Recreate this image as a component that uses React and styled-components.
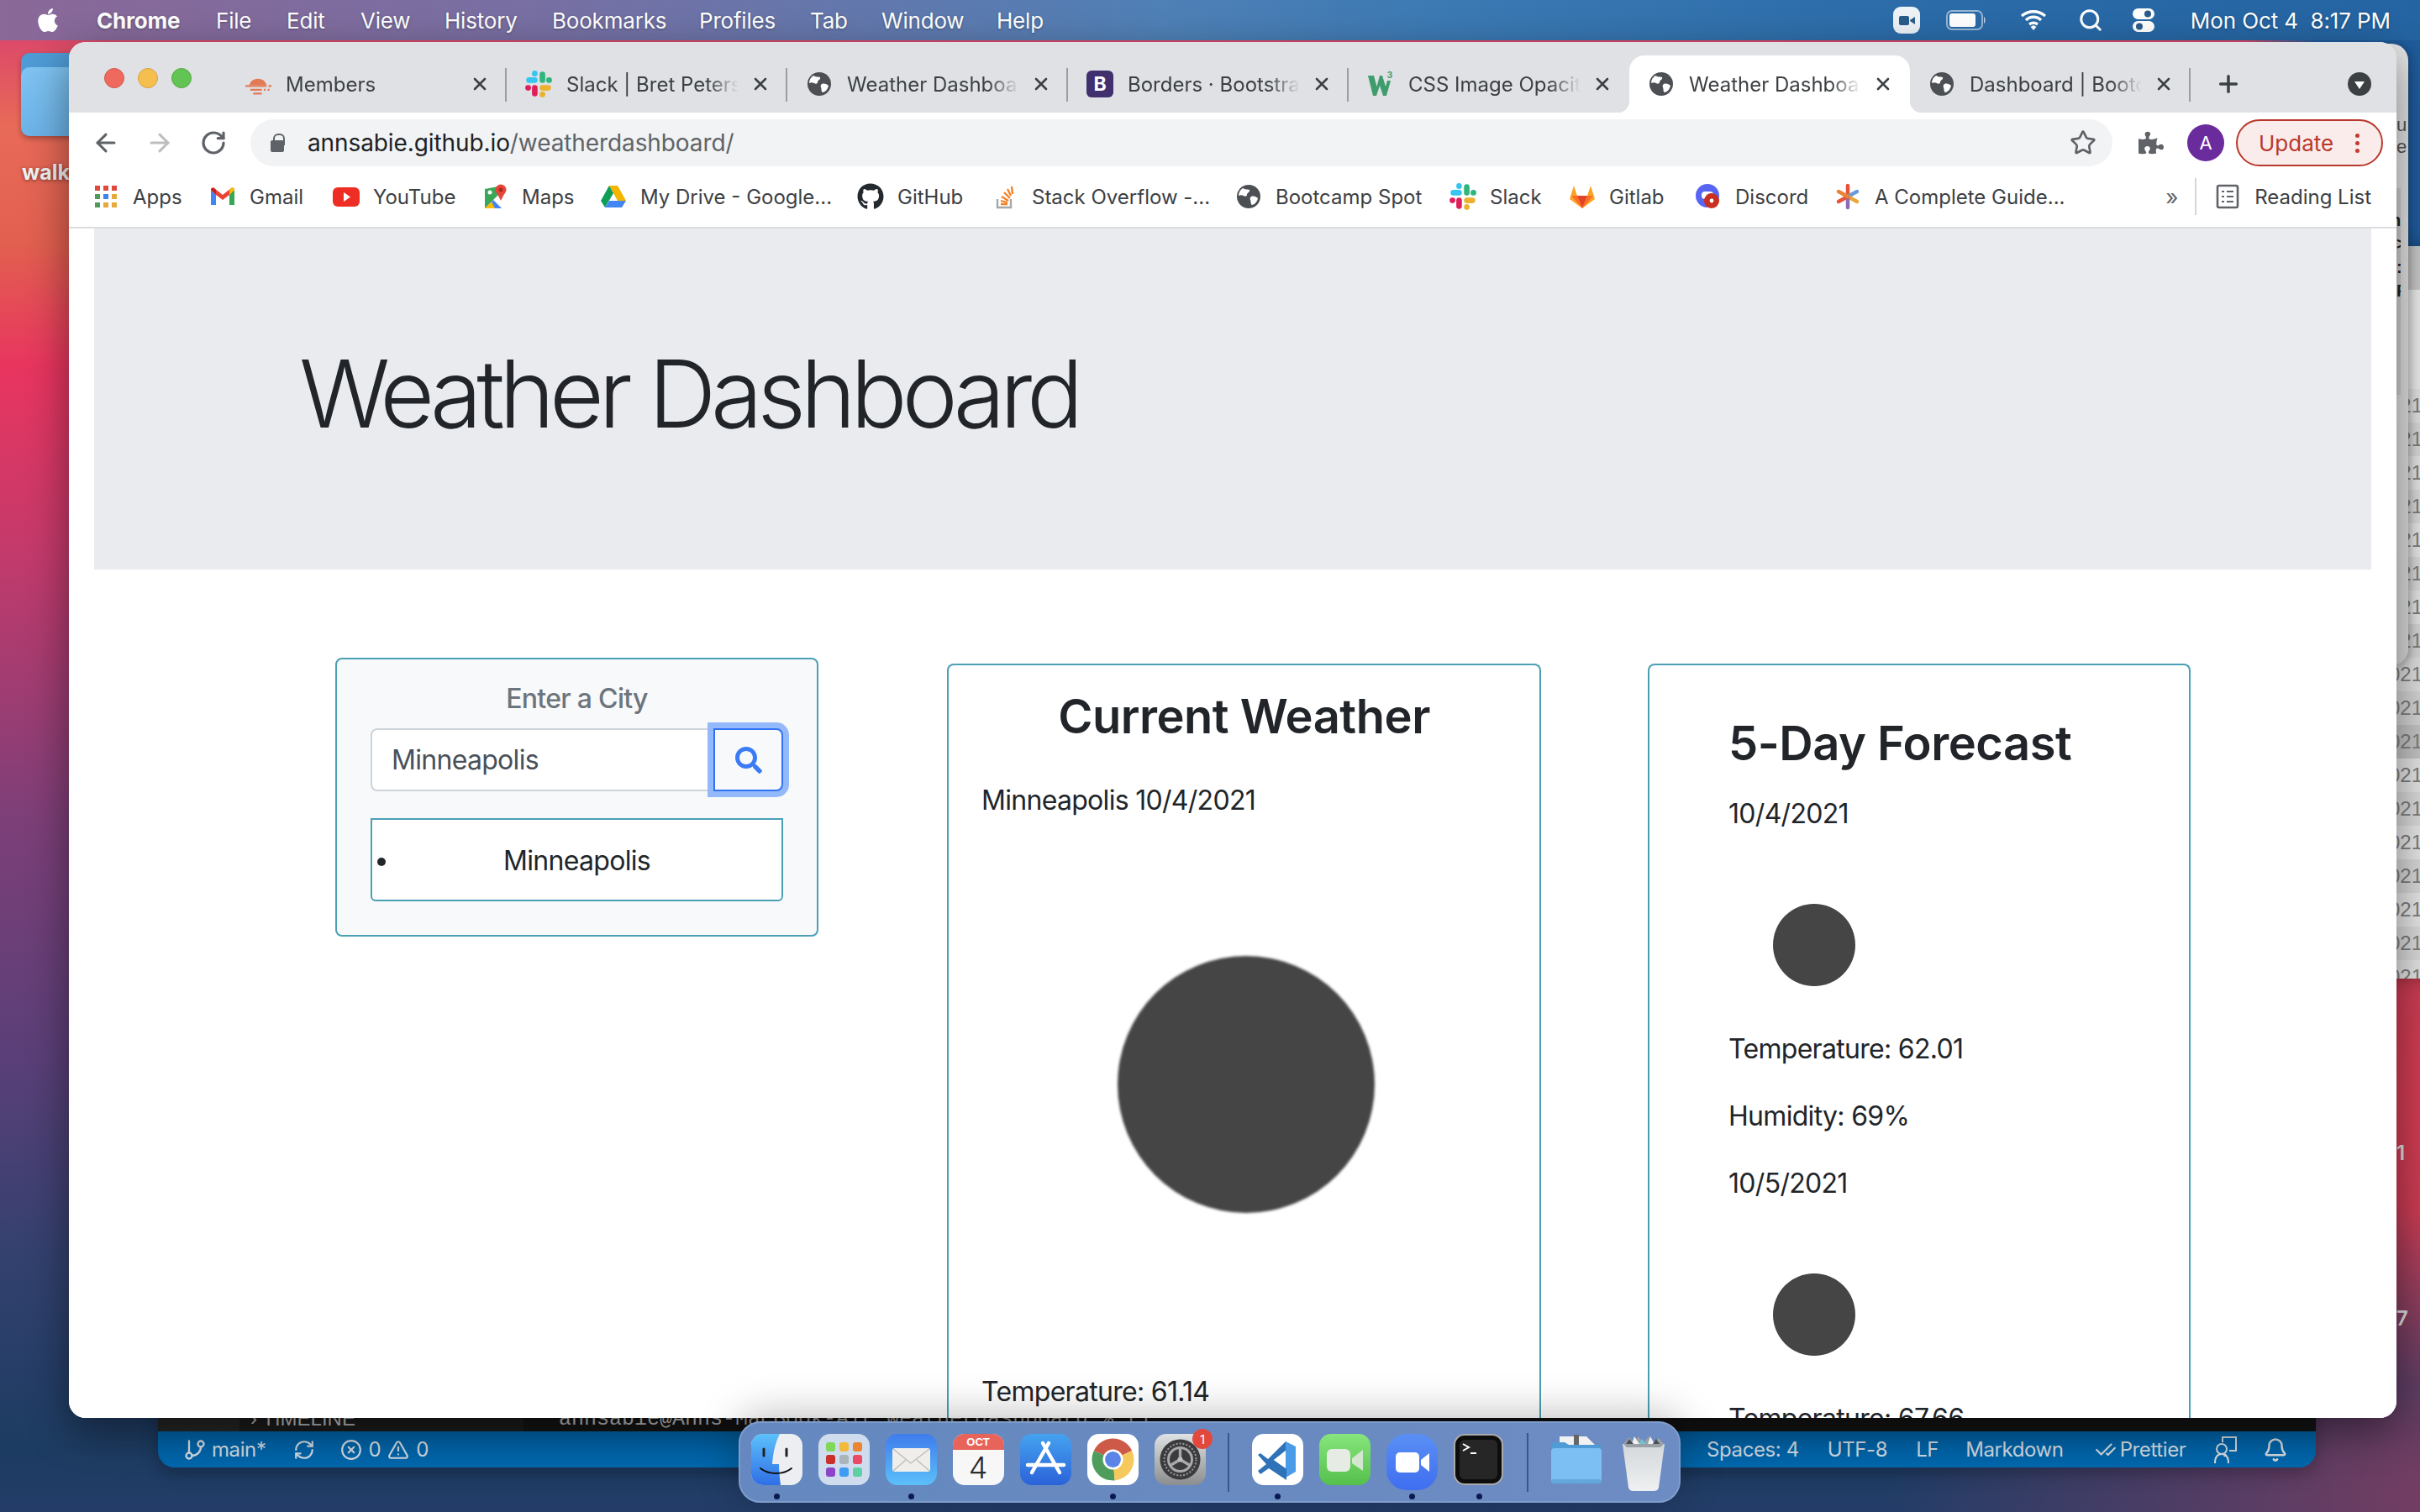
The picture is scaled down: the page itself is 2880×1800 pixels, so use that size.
import React from "react";
import styled, { createGlobalStyle } from "styled-components";
import { FaApple, FaGithub, FaPuzzlePiece, FaSearch } from "react-icons/fa";
import { ArrowLeft, ArrowRight, RotateCw, Star, Plus, X, Search, GitBranch, RefreshCw, XCircle, AlertTriangle, CheckCheck, Bell } from "lucide-react";

const UI = `Inter, "Noto Sans", "Liberation Sans", sans-serif`;

const Global = createGlobalStyle`
  html, body { margin: 0; padding: 0; width: 2880px; height: 1800px; overflow: hidden; }
  * { box-sizing: border-box; }
  body { font-family: ${UI}; }
`;

const Desktop = styled.div`
  position: relative; width: 2880px; height: 1800px; overflow: hidden;
  background:
    radial-gradient(ellipse 420px 360px at 2960px 1300px, #d63c50 0%, #c93b52 45%, rgba(150,60,90,0) 100%),
    radial-gradient(ellipse 700px 400px at 2950px 1780px, #7c3d62 0%, rgba(80,68,115,0) 100%),
    radial-gradient(ellipse 260px 520px at 2920px 200px, #1f5b9c 0%, #1f5b9c 70%, rgba(31,91,156,0) 100%),
    linear-gradient(180deg, #dd4a68 50px, #e86a58 150px, #e2604f 290px, #e8355f 436px, #c53a6b 650px, #7d3f78 975px, #5a3f78 1263px, #34416f 1490px, #1d3c62 1722px, #233d68 1800px);
`;

const MenuBar = styled.div`
  display: flex; align-items: center; height: 48px; padding-left: 41px; color: #fff;
  background: linear-gradient(90deg, #8a6898 0%, #786fa3 22%, #4f80b6 48%, #3b79b3 60%, #2a6ba8 80%, #2464a2 100%);
  font-size: 26px; text-shadow: 0 1px 3px rgba(0,0,0,.3);
`;
const AppleMark = styled.div` display: flex; width: 74px; `;
const MenuItem = styled.div`
  width: ${p => p.$w}px; flex: none; font-weight: ${p => p.$bold ? 700 : 400}; white-space: nowrap; letter-spacing: -.2px;
`;
const MenuRight = styled.div` display: flex; align-items: center; margin-left: auto; padding-right: 35px; `;
const StatusIcon = styled.div`
  display: flex; align-items: center; justify-content: center; width: ${p => p.$w}px; margin-right: ${p => p.$mr}px;
`;
const Clock = styled.div` width: 244px; white-space: pre; text-align: right; font-size: 26px; letter-spacing: -.1px; `;

const DesktopFolder = styled.div`
  position: absolute; left: 25px; top: 63px; width: 120px; height: 99px;
  border-radius: 10px; background: #4f9bd5; box-shadow: 0 3px 6px rgba(0,0,0,.3);
  &::after { content: ""; position: absolute; left: 0; right: 0; top: 17px; bottom: 0; border-radius: 10px; background: linear-gradient(180deg,#7fc4f3,#6cb3e8); }
`;
const DesktopLabel = styled.div`
  position: absolute; left: 26px; top: 190px; color: #f2f2f2; font-size: 25px; font-weight: 700; text-shadow: 0 1px 4px rgba(0,0,0,.5);
`;

const StackWindow = styled.div`
  position: absolute; left: 2840px; top: 293px; width: 60px; height: 872px; background: #dcdcdc; overflow: hidden;
  font-family: "Liberation Sans", sans-serif; box-shadow: 0 0 20px rgba(0,0,0,.3);
`;
const StackHead = styled.div` height: 52px; background: #c6c6c6; `;
const StackBar = styled.div`
  height: 118px; background: #e9e9e9; padding: 2px 0 0 28px; font-size: 26px; font-weight: 700; color: #222;
`;
const StackRow = styled.div`
  height: 40px; padding-left: 3px; font-size: 24px; line-height: 40px; color: #7c7c7c; background: ${p => p.$c}; white-space: nowrap;
`;
const MiddleWindow = styled.div`
  position: absolute; left: 2830px; top: 52px; width: 36px; height: 740px; border-radius: 0 20px 20px 0; padding-left: 22px; overflow: hidden;
  background: linear-gradient(180deg,#e6e6e6,#d8d8d8); box-shadow: 2px 2px 10px rgba(0,0,0,.25);
  font-family: "Liberation Sans", sans-serif;
`;
const MiddleHead = styled.div` height: 172px; padding-top: 84px; font-size: 22px; line-height: 26px; color: #555; white-space: pre; `;
const MiddleText = styled.div`
  width: 5px; height: 246px; padding-top: 24px; overflow: hidden; background: #cdcdcd; color: #222; font-size: 20px; line-height: 28px; font-weight: 700; text-indent: -7px;
`;
const SideScrap = styled.div`
  position: absolute; left: 2852px; top: ${p => p.$y}px; color: #ddd; font-size: 24px; font-weight: 600;
`;

const CodeWindow = styled.div`
  position: absolute; left: 188px; top: 1660px; width: 2568px; height: 87px; display: flex; flex-direction: column;
  border-radius: 0 0 20px 20px; overflow: hidden; box-shadow: 0 8px 20px rgba(0,0,0,.25);
`;
const CodeBody = styled.div` display: flex; height: 44px; background: #141414; `;
const CodeRail = styled.div` width: 97px; background: #252525; `;
const CodeSide = styled.div` width: 338px; background: #1b1b1b; padding: 15px 0 0 13px; color: #bdbdbd; font-size: 24px; font-family: "Liberation Sans", sans-serif; `;
const CodeTerm = styled.div` padding: 15px 0 0 42px; color: #bdbdbd; font-size: 25px; font-family: "Liberation Mono", monospace; white-space: nowrap; `;
const CodeStatus = styled.div`
  display: flex; align-items: center; height: 43px; padding: 0 44px 0 30px; color: #d3dbe3; font-size: 24px; letter-spacing: -.4px;
  background: linear-gradient(180deg,#0061a4,#0068ae);
`;
const CodeItem = styled.div`
  display: flex; align-items: center; gap: ${p => p.$gap || 6}px; margin-left: ${p => p.$ml || 0}px; white-space: nowrap;
`;

const Browser = styled.div`
  position: absolute; left: 82px; top: 50px; width: 2770px; height: 1638px; display: flex; flex-direction: column;
  border-radius: 20px; overflow: hidden; background: #fff; box-shadow: 0 16px 50px rgba(0,0,0,.45);
`;
const TabStrip = styled.div`
  display: flex; align-items: flex-start; height: 84px; flex: none; background: #dfe1e5; color: #3c4043; font-size: 24px;
`;
const Lights = styled.div` display: flex; gap: 16px; width: 187px; flex: none; padding: 31px 0 0 42px; `;
const Light = styled.div`
  width: 24px; height: 24px; border-radius: 50%; background: ${p => p.$c}; border: 1px solid ${p => p.$b};
`;
const Tab = styled.div`
  position: relative; display: flex; align-items: center; width: 334px; height: 68px; margin-top: 16px; padding-left: 22px; flex: none;
  border-radius: 18px 18px 0 0; background: ${p => p.$active ? "#fff" : "transparent"};
  &::after {
    content: ""; position: absolute; right: 0; top: 15px; height: 40px; width: 2px;
    background: ${p => p.$sep ? "#9a9da1" : "transparent"};
  }
`;
const TabFoot = styled.i`
  position: absolute; bottom: 0; ${p => p.$side}: -14px; width: 14px; height: 14px;
  background: radial-gradient(circle at ${p => p.$side === "left" ? "0 0" : "100% 0"}, transparent 14px, #fff 14.5px);
`;
const TabIcon = styled.div` display: flex; width: 32px; height: 32px; flex: none; `;
const TabTitle = styled.div`
  width: 205px; margin-left: 17px; white-space: nowrap; overflow: hidden; flex: none;
  -webkit-mask-image: linear-gradient(90deg,#000 82%,transparent 100%);
  mask-image: linear-gradient(90deg,#000 82%,transparent 100%);
`;
const TabClose = styled.div` display: flex; margin-left: 14px; color: #3c4043; `;
const NewTab = styled.div` display: flex; margin: 34px 0 0 29px; color: #3c4043; `;
const TabMenu = styled.div`
  display: flex; align-items: center; justify-content: center; width: 28px; height: 28px; margin: 36px 30px 0 auto; border-radius: 50%; background: #3c4043;
  &::after { content: ""; border-style: solid; border-width: 9px 6.5px 0 6.5px; border-color: #fff transparent transparent transparent; margin-top: 2px; }
`;

const Toolbar = styled.div`
  display: flex; align-items: center; height: 71px; flex: none; padding: 0 16px 0 12px; background: #fff;
`;
const NavButton = styled.div` display: flex; justify-content: center; width: 64px; color: ${p => p.$dim ? "#bdbec0" : "#5f6368"}; `;
const UrlBar = styled.div`
  display: flex; align-items: center; flex: 1; height: 56px; margin-left: 12px; padding: 0 19px 0 24px; border-radius: 28px; background: #f1f3f4;
`;
const Lock = styled.div`
  position: relative; width: 16px; height: 14px; margin-top: 8px; border-radius: 2px; background: #5f6368;
  &::before { content: ""; position: absolute; left: 3px; top: -8px; width: 10px; height: 12px; border: 2.5px solid #5f6368; border-bottom: 0; border-radius: 6px 6px 0 0; }
`;
const UrlText = styled.div` margin-left: 28px; font-size: 28px; color: #5f6368; white-space: nowrap; letter-spacing: -.1px; b { font-weight: 400; color: #202124; } `;
const StarSlot = styled.div` display: flex; margin-left: auto; color: #5f6368; `;
const Puzzle = styled.div` display: flex; margin-left: 30px; width: 32px; justify-content: center; color: #5f6368; `;
const Avatar = styled.div`
  display: flex; align-items: center; justify-content: center; width: 44px; height: 44px; margin-left: 27px; border-radius: 50%;
  background: #6a2b9c; color: #fff; font-size: 22px;
`;
const UpdateBtn = styled.div`
  display: flex; align-items: center; width: 175px; height: 56px; margin-left: 14px; padding: 2px 0 0 25px; border-radius: 28px;
  border: 2px solid #b8392b; background: #f9ecea; color: #b8392b; font-size: 26px;
`;
const Kebab = styled.div`
  display: flex; flex-direction: column; gap: 4px; margin-left: 26px;
  i { display: block; width: 5px; height: 5px; border-radius: 50%; background: #c43a2c; }
`;

const Bookmarks = styled.div`
  display: flex; align-items: center; height: 67px; flex: none; padding: 0 30px 7px 28px; font-size: 24px; color: #3c4043;
  background: #fff; border-bottom: 2px solid #dcdde0;
`;
const Bookmark = styled.div`
  display: flex; align-items: center; gap: 16px; flex: none; width: ${p => p.$w ? p.$w + "px" : "auto"}; white-space: nowrap;
`;
const BmIcon = styled.div` display: flex; width: 32px; height: 32px; flex: none; `;
const BmRight = styled.div` display: flex; align-items: center; margin-left: auto; `;
const Chevron = styled.div` width: 35px; font-size: 26px; text-align: left; color: #5f6368; `;
const BmDivider = styled.div` width: 2px; height: 44px; background: #d5d6d8; margin-right: 21px; `;

const Page = styled.div` flex: 1; min-height: 0; overflow: hidden; background: #fff; color: #212529; font-size: 32px; letter-spacing: -.7px; `;
const Jumbotron = styled.div`
  display: flex; align-items: center; height: 406px; margin: 0 30px; padding: 0 0 14px 244px; background: #e9ebef;
`;
const Display = styled.h1` margin: 0; font-size: 112px; font-weight: 300; line-height: 1.2; color: #212529; letter-spacing: -6.3px; white-space: nowrap; `;
const Columns = styled.div` display: flex; align-items: flex-start; padding-left: 317px; `;
const SearchCard = styled.div`
  width: 575px; margin-top: 105px; padding: 23px 40px 40px; flex: none; border: 2px solid #4aa0b5; border-radius: 8px; background: #f8f9fa;
`;
const SearchLabel = styled.div` text-align: center; color: #6c757d; font-weight: 500; line-height: 48px; `;
const InputGroup = styled.div` display: flex; height: 75px; margin-top: 11px; `;
const CityInput = styled.input`
  flex: 1; min-width: 0; height: 100%; padding: 0 23px; border: 2px solid #ced4da; border-right: 0; border-radius: 8px 0 0 8px;
  background: #fff; color: #495057; font: 400 32px ${UI}; letter-spacing: -.7px; outline: none;
`;
const SearchBtn = styled.div`
  display: flex; align-items: center; justify-content: center; width: 83px; flex: none; position: relative;
  border: 2px solid #2f72f5; border-radius: 0 8px 8px 0; background: #f8f9fa; color: #3b7cf6;
  box-shadow: 0 0 0 7px #94b9fb;
`;
const CityList = styled.ul` list-style: none; margin: 32px 0 0; padding: 0; `;
const CityItem = styled.li`
  position: relative; display: flex; align-items: center; justify-content: center; height: 99px; padding-top: 2px; border: 2px solid #4aa0b5; border-radius: 0 0 6px 6px; background: #fff; line-height: 1;
  &::before { content: ""; position: absolute; left: 6px; top: 45px; width: 10px; height: 10px; border-radius: 50%; background: #212529; }
`;
const Card = styled.div`
  width: ${p => p.$w}px; margin: 112px 0 0 ${p => p.$ml}px; padding: ${p => p.$pt}px ${p => p.$pr || 0}px 0 ${p => p.$pl}px; flex: none; border: 2px solid #4aa0b5; border-bottom: 0; border-radius: 8px 8px 0 0; background: #fff;
`;
const CardTitle = styled.h2`
  margin: 0 0 ${p => p.$mb}px; text-align: ${p => p.$center ? "center" : "left"}; font-size: 56px; font-weight: 600; letter-spacing: -.5px; line-height: 1.2; color: #212529; white-space: nowrap;
`;
const Line = styled.p` margin: 0 0 32px; line-height: 48px; white-space: nowrap; `;
const BigSun = styled.div`
  width: 306px; height: 306px; margin: 161px 0 189px 162px; border-radius: 50%; background: #454545; filter: blur(1.5px);
`;
const SmallFrame = styled.div` display: flex; align-items: center; justify-content: center; width: 200px; height: 200px; margin-left: 2px; `;
const SmallSun = styled.div` width: 98px; height: 98px; border-radius: 50%; background: #454545; `;

const Dock = styled.div`
  position: absolute; left: 879px; top: 1692px; width: 1121px; height: 97px; display: flex; padding: 0 0 0 3px;
  border-radius: 26px; border: 2px solid #7f9dcc; background: linear-gradient(90deg,#6488bf,#6d8cc3);
  box-shadow: 0 -6px 50px rgba(0,0,0,.28);
`;
const DockCell = styled.div`
  position: relative; display: flex; flex-direction: column; align-items: center; width: ${p => p.$w || 80}px; flex: none; padding-top: 13px; height: 95px;
`;
const DockDot = styled.div`
  position: absolute; left: 50%; top: 84px; width: 7px; height: 7px; margin-left: -3.5px; border-radius: 50%; background: #0a1a4f;
`;
const DockSep = styled.div` width: 2px; height: 70px; margin: 12px ${p => p.$r}px 0 ${p => p.$l}px; flex: none; background: #36588f; `;
const Badge = styled.div`
  position: absolute; right: 1px; top: 7px; width: 24px; height: 24px; border-radius: 50%; background: #e2493c; color: #fff;
  display: flex; align-items: center; justify-content: center; font-size: 15px;
`;
const CalFace = styled.div`
  width: 61px; height: 61px; border-radius: 14px; overflow: hidden; display: flex; flex-direction: column; background: #f7f7f7; font-family: "Liberation Sans", sans-serif;
`;
const CalHead = styled.div` height: 19px; background: #e8645a; color: #fff; font-size: 13px; font-weight: 700; text-align: center; line-height: 20px; `;
const CalDay = styled.div` flex: 1; text-align: center; color: #2b2b2b; font-size: 36px; line-height: 42px; font-weight: 300; font-family: ${UI}; `;

/* ---------- favicons ---------- */
const Globe = () => (
  <svg viewBox="0 0 32 32" width="32" height="32">
    <circle cx="16" cy="16" r="14" fill="#4c4f54" />
    <path d="M9 6c3 2 5 1 8 2 1 3-3 3-3 6 0 2-3 2-4 1-2-1-4-1-6 0 0-4 2-7 5-9zM19 16c3-1 6 0 8 2-1 4-3 7-7 8-2-1-1-4-2-6-1-2 0-3 1-4z" fill="#fff" />
  </svg>
);
const MembersIcon = () => (
  <svg viewBox="2 5 28 26" width="32" height="32">
    <path d="M7 19a9.5 9.5 0 0 1 18 0z" fill="#e27a55" />
    <path d="M3 20h22M8 24h12M27 20h3M22 24h2M26 24h2M11 28h9" stroke="#e27a55" strokeWidth="2" />
  </svg>
);
const SlackIcon = () => (
  <svg viewBox="2 2 28 28" width="32" height="32">
    <g strokeWidth="5.8" strokeLinecap="round">
      <path d="M12 5v.2M12 12H6" stroke="#36c5f0" />
      <path d="M20 6v6M27 12h-.2" stroke="#2eb67d" />
      <path d="M20 27v-.2M20 20h6" stroke="#ecb22e" />
      <path d="M12 20v6M5 20h.2" stroke="#e01e5a" />
    </g>
  </svg>
);
const BootstrapIcon = () => (
  <svg viewBox="0 0 32 32" width="32" height="32">
    <rect x="0" y="0" width="32" height="32" rx="6" fill="#41306e" />
    <text x="16" y="24" textAnchor="middle" fontSize="23" fontWeight="700" fill="#fff" fontFamily="Inter, sans-serif">B</text>
  </svg>
);
const W3Icon = () => (
  <svg viewBox="0 0 32 32" width="32" height="32">
    <path d="M1 6h7l3.5 13L15 6h3l4 13 2-7h4l-5 18h-4l-4-12-4 12H7z" fill="#3f9d6c" />
    <text x="27" y="9" textAnchor="middle" fontSize="10" fontWeight="700" fill="#3f9d6c" fontFamily="Inter, sans-serif">3</text>
  </svg>
);
const AppsIcon = () => (
  <svg viewBox="0 0 32 32" width="32" height="32">
    {["#dd4a3a","#dd4a3a","#dd4a3a","#4f9a5c","#3f83ee","#e9a93a","#4f9a5c","#e9a93a","#e9a93a"].map((c, i) => (
      <rect key={i} x={3 + (i % 3) * 10} y={3 + Math.floor(i / 3) * 10} width="6" height="6" fill={c} />
    ))}
  </svg>
);
const GmailIcon = () => (
  <svg viewBox="0 0 32 32" width="32" height="32">
    <path d="M2 8v18h6V14z" fill="#4285f4" />
    <path d="M30 8v18h-6V14z" fill="#34a853" />
    <path d="M8 14L2 8c0-2 2-3 4-2l10 8 10-8c2-1 4 0 4 2l-6 6-8 6z" fill="#ea4335" />
    <path d="M24 8l2-2c2-1 4 0 4 2l-6 6z" fill="#fbbc04" />
    <path d="M2 8c0-2 2-3 4-2l2 2v6z" fill="#c5221f" />
  </svg>
);
const YouTubeIcon = () => (
  <svg viewBox="0 0 32 32" width="32" height="32">
    <rect x="0" y="5" width="32" height="23" rx="6" fill="#ee2e24" />
    <path d="M13 11l8 5.5-8 5.5z" fill="#fff" />
  </svg>
);
const MapsIcon = () => (
  <svg viewBox="0 0 32 32" width="32" height="32">
    <path d="M4 7l16-3v10L4 30z" fill="#3aa757" />
    <path d="M4 30l10-10 10 10z" fill="#4285f4" />
    <path d="M4 30l8-8 4 8z" fill="#fbbc04" />
    <circle cx="23" cy="8" r="6.5" fill="#e5453a" />
    <path d="M18 11l5 10 5-10z" fill="#e5453a" />
    <circle cx="23" cy="8" r="2.5" fill="#a92a20" />
    <circle cx="10" cy="11" r="2.5" fill="#fff" />
  </svg>
);
const DriveIcon = () => (
  <svg viewBox="0 0 32 32" width="32" height="32">
    <path d="M11 3h10l10 18H21z" fill="#f4b400" />
    <path d="M11 3l5 9-10 17-5-8z" fill="#0f9d58" />
    <path d="M11 21h20l-5 8H6z" fill="#4285f4" />
  </svg>
);
const SOIcon = () => (
  <svg viewBox="0 0 32 32" width="32" height="32">
    <path d="M7 19v10h16V19" fill="none" stroke="#a7a7a7" strokeWidth="2.4" />
    <path d="M11 25h8M11 21l8 2M12 16l8 5M15 11l7 7M19 7l4 8M24 4l1 9" stroke="#f48024" strokeWidth="2.3" fill="none" />
  </svg>
);
const GitlabIcon = () => (
  <svg viewBox="0 0 32 32" width="32" height="32">
    <path d="M16 30L1 19l5-16 4 12h12l4-12 5 16z" fill="#fca326" />
    <path d="M16 30L10 15h12z" fill="#e24329" />
    <path d="M16 30L10 15H3z M16 30l6-15h7z" fill="#fc6d26" />
  </svg>
);
const DiscordIcon = () => (
  <svg viewBox="0 0 32 32" width="32" height="32">
    <circle cx="15" cy="15" r="14" fill="#5865f2" />
    <rect x="8" y="10" width="14" height="9" rx="4" fill="#fff" />
    <circle cx="20" cy="21" r="9" fill="#c9301f" />
    <circle cx="20" cy="21" r="2.4" fill="#fff" />
  </svg>
);
const AsteriskIcon = () => (
  <svg viewBox="0 0 32 32" width="32" height="32">
    <g strokeWidth="4.5" strokeLinecap="round">
      <path d="M16 16V3" stroke="#e5533a" />
      <path d="M16 16l11-6" stroke="#6a9bd6" />
      <path d="M16 16l11 6" stroke="#e9a63a" />
      <path d="M16 16v13" stroke="#8e6bb5" />
      <path d="M16 16L5 22" stroke="#e5533a" />
      <path d="M16 16L5 10" stroke="#e9833a" />
    </g>
  </svg>
);
const ReadingIcon = () => (
  <svg viewBox="0 0 32 32" width="32" height="32">
    <rect x="4" y="3" width="24" height="26" rx="2" fill="none" stroke="#5f6368" strokeWidth="2.6" />
    <path d="M9 10h3M15 10h8M9 16h3M15 16h8M9 22h3M15 22h8" stroke="#5f6368" strokeWidth="2.2" />
  </svg>
);

/* ---------- menu bar ---------- */
const CamStatus = () => (
  <svg viewBox="0 0 32 32" width="32" height="32">
    <rect x="0" y="0" width="32" height="32" rx="9" fill="#eef3f8" />
    <rect x="7" y="11" width="12" height="11" rx="2" fill="#2b5b8c" />
    <path d="M20 16l6-4v9l-6-4z" fill="#2b5b8c" />
  </svg>
);
const BatteryStatus = () => (
  <svg viewBox="0 0 48 28" width="48" height="28">
    <rect x="1" y="3" width="42" height="22" rx="6" fill="none" stroke="#c7d7e8" strokeWidth="2" opacity=".7" />
    <rect x="4" y="6" width="31" height="16" rx="3" fill="#fff" />
    <path d="M45 10c2 1 2 7 0 8z" fill="#c7d7e8" />
  </svg>
);
const WifiStatus = () => (
  <svg viewBox="0 0 32 28" width="32" height="28" fill="none" stroke="#fff" strokeWidth="3.4">
    <path d="M2 9c8-7 20-7 28 0M7 14c5-5 13-5 18 0M11 19c3-2 7-2 10 0" />
    <path d="M12.5 22l3.5-2 3.5 2-3.5 4z" fill="#fff" stroke="none" />
  </svg>
);
const ControlStatus = () => (
  <svg viewBox="0 0 32 32" width="32" height="32">
    <rect x="3" y="2" width="26" height="13" rx="6.5" fill="#fff" />
    <circle cx="21" cy="8.5" r="4" fill="#2b5b8c" />
    <rect x="3" y="17" width="26" height="13" rx="6.5" fill="#fff" />
    <circle cx="11" cy="23.5" r="4" fill="#2b5b8c" />
  </svg>
);

/* ---------- dock ---------- */
const sector = (cx, cy, r, a0, a1) => {
  const p = a => [cx + r * Math.cos(a * Math.PI / 180), cy + r * Math.sin(a * Math.PI / 180)];
  const [x0, y0] = p(a0); const [x1, y1] = p(a1);
  return `M${cx} ${cy}L${x0} ${y0}A${r} ${r} 0 0 1 ${x1} ${y1}Z`;
};
const Finder = () => (
  <svg viewBox="0 0 61 61" width="61" height="61">
    <defs>
      <linearGradient id="fd" x1="0" y1="0" x2="0" y2="1"><stop offset="0" stopColor="#5cc0fa" /><stop offset="1" stopColor="#2f6fe6" /></linearGradient>
      <clipPath id="fc"><rect width="61" height="61" rx="14" /></clipPath>
    </defs>
    <g clipPath="url(#fc)">
      <rect width="61" height="61" fill="#eceef2" />
      <path d="M0 0h34c-6 12-8 24-9 36h8c0 8 1 17 2 25H0z" fill="url(#fd)" />
    </g>
    <path d="M15 18v8M42 18v8" stroke="#222" strokeWidth="3" strokeLinecap="round" />
    <path d="M11 41c10 8 27 8 37 0" stroke="#111" strokeWidth="2" fill="none" strokeLinecap="round" />
  </svg>
);
const Launchpad = () => (
  <svg viewBox="0 0 61 61" width="61" height="61">
    <rect width="61" height="61" rx="14" fill="#cfdced" />
    {["#7fd858","#f3b93a","#e9862f","#c9302a","#aab4bb","#ea4a66","#8c45c9","#3f9bf3","#5fd0a5"].map((c, i) => (
      <rect key={i} x={9 + (i % 3) * 16} y={10 + Math.floor(i / 3) * 15} width="11" height="11" rx="3" fill={c} />
    ))}
  </svg>
);
const Mail = () => (
  <svg viewBox="0 0 61 61" width="61" height="61">
    <defs><linearGradient id="ml" x1="0" y1="0" x2="0" y2="1"><stop offset="0" stopColor="#3f7cec" /><stop offset="1" stopColor="#5cc0fa" /></linearGradient></defs>
    <rect width="61" height="61" rx="14" fill="url(#ml)" />
    <rect x="8" y="17" width="45" height="28" rx="3" fill="#f0eeea" />
    <path d="M9 18l21 17 22-17M9 44l15-13M52 44L37 31" stroke="#bdbab3" strokeWidth="1.2" fill="none" />
  </svg>
);
const AppStore = () => (
  <svg viewBox="0 0 61 61" width="61" height="61">
    <defs><linearGradient id="as" x1="0" y1="0" x2="0" y2="1"><stop offset="0" stopColor="#45a3f0" /><stop offset="1" stopColor="#2b62d8" /></linearGradient></defs>
    <rect width="61" height="61" rx="14" fill="url(#as)" />
    <path d="M34 11L14 46M27 11l20 35M9 37h43" stroke="#fff" strokeWidth="4.4" strokeLinecap="round" />
  </svg>
);
const ChromeApp = () => (
  <svg viewBox="0 0 61 61" width="61" height="61">
    <rect width="61" height="61" rx="14" fill="#fff" />
    <path d={sector(30.5, 30.5, 25, 205, 335)} fill="#cd5a48" />
    <path d={sector(30.5, 30.5, 25, 85, 205)} fill="#4f9d5d" />
    <path d={sector(30.5, 30.5, 25, -25, 85)} fill="#f5c95c" />
    <circle cx="30.5" cy="30.5" r="12" fill="#fff" />
    <circle cx="30.5" cy="30.5" r="9.4" fill="#5a85e6" />
  </svg>
);
const Gear = () => (
  <svg viewBox="0 0 61 61" width="61" height="61">
    <defs><linearGradient id="gr" x1="0" y1="0" x2="0" y2="1"><stop offset="0" stopColor="#dfe2e4" /><stop offset="1" stopColor="#8b8d8e" /></linearGradient></defs>
    <rect width="61" height="61" rx="14" fill="url(#gr)" />
    <circle cx="30.5" cy="30.5" r="24" fill="#3b3b3d" />
    <circle cx="30.5" cy="30.5" r="19" fill="none" stroke="#9a9a9c" strokeWidth="2" strokeDasharray="2 2" />
    <circle cx="30.5" cy="30.5" r="14" fill="none" stroke="#a9a9ab" strokeWidth="3" />
    <path d="M30.5 30.5V17M30.5 30.5L18 38M30.5 30.5L43 38" stroke="#a9a9ab" strokeWidth="3.4" />
    <circle cx="30.5" cy="30.5" r="3" fill="#bdbdbf" />
  </svg>
);
const VSCode = () => (
  <svg viewBox="0 0 61 61" width="61" height="61">
    <rect width="61" height="61" rx="14" fill="#fff" />
    <path d="M40 9l12 6v30l-12 7z" fill="#4a9be8" />
    <path d="M40 9L19 30l-9-7-3 2 10 11-10 8 3 4 10-7 21 14V41L26 31l14-11z" fill="#2f72b8" />
    <path d="M40 20v21L26 31z" fill="#fff" />
  </svg>
);
const FaceTime = () => (
  <svg viewBox="0 0 61 61" width="61" height="61">
    <defs><linearGradient id="ft" x1="0" y1="0" x2="0" y2="1"><stop offset="0" stopColor="#86e57c" /><stop offset="1" stopColor="#55c04c" /></linearGradient></defs>
    <rect width="61" height="61" rx="14" fill="url(#ft)" />
    <rect x="9" y="18" width="28" height="27" rx="6" fill="#e6ece4" />
    <path d="M39 29l13-10v25L39 35z" fill="#d4e6cf" />
  </svg>
);
const ZoomApp = () => (
  <svg viewBox="0 0 61 67" width="61" height="67">
    <defs><linearGradient id="zm" x1="0" y1="0" x2="0" y2="1"><stop offset="0" stopColor="#5a8ff5" /><stop offset="1" stopColor="#3f6ef0" /></linearGradient></defs>
    <rect width="61" height="67" rx="24" fill="url(#zm)" />
    <rect x="11" y="22" width="28" height="24" rx="5" fill="#fff" />
    <path d="M41 31l10-8v22l-10-8z" fill="#fff" />
  </svg>
);
const Terminal = () => (
  <svg viewBox="0 0 61 61" width="61" height="61">
    <rect x="1" y="1" width="57" height="59" rx="12" fill="#0d0d0d" stroke="#a9a9a9" strokeWidth="2" />
    <rect x="7" y="7" width="45" height="47" rx="6" fill="#262626" />
    <path d="M11 12l7 4-7 4" stroke="#fff" strokeWidth="2" fill="none" />
    <path d="M20 23h7" stroke="#fff" strokeWidth="2" />
  </svg>
);
const FolderApp = () => (
  <svg viewBox="0 0 61 61" width="61" height="61">
    <path d="M10 3h32l12 12v10H10z" fill="#f1f1f1" />
    <rect x="27" y="1" width="6" height="14" fill="#666" />
    <path d="M1 13c0-2 1-3 3-3h12l5 3h36c2 0 3 1 3 3v8H1z" fill="#4f9bd5" />
    <rect x="0" y="17" width="60" height="42" rx="4" fill="#7cc0f3" />
    <rect x="0" y="54" width="60" height="5" rx="2.5" fill="#64a7dc" />
  </svg>
);
const Trash = () => (
  <svg viewBox="0 0 54 68" width="54" height="68">
    <defs><linearGradient id="tr" x1="0" y1="0" x2="0" y2="1"><stop offset="0" stopColor="#d4d8da" /><stop offset="1" stopColor="#eef0f1" /></linearGradient></defs>
    <path d="M2 12h50l-7 52c-1 3-3 4-6 4H15c-3 0-5-1-6-4z" fill="url(#tr)" />
    <path d="M3 12l7-8 5 6 6-7 6 8 6-8 5 8 7-6 6 7-4 4H7z" fill="#9aa0a6" />
    <path d="M16 3l6 9h-9zM35 3l5 9h-8z" fill="#f1f1f1" />
    <path d="M25 6l5 6h-8z" fill="#6ac4d8" />
    <path d="M10 6l5 6H6zM42 6l4 6h-8z" fill="#4a4f58" />
  </svg>
);

const MENU = [["Chrome",142,true],["File",84],["Edit",88],["View",100],["History",128],["Bookmarks",175],["Profiles",132],["Tab",85],["Window",137],["Help",80]];
const TABS = [
  ["Members", <MembersIcon />], ["Slack | Bret Peters", <SlackIcon />], ["Weather Dashboard", <Globe />],
  ["Borders · Bootstrap", <BootstrapIcon />], ["CSS Image Opacity", <W3Icon />],
  ["Weather Dashboard", <Globe />, true], ["Dashboard | Bootcamp", <Globe />],
];
const BOOKMARKS = [
  ["Apps",139,<AppsIcon />],["Gmail",147,<GmailIcon />],["YouTube",177,<YouTubeIcon />],["Maps",141,<MapsIcon />],
  ["My Drive - Google...",306,<DriveIcon />],["GitHub",160,<FaGithub size={32} color="#24292e" />],["Stack Overflow -...",290,<SOIcon />],
  ["Bootcamp Spot",255,<Globe />],["Slack",142,<SlackIcon />],["Gitlab",150,<GitlabIcon />],["Discord",166,<DiscordIcon />],["A Complete Guide...",0,<AsteriskIcon />],
];
const ROW_C = ["#e0e0e0","#d6d6d6","#e2e2e2","#d8d8d8","#e4e4e4","#d8d8d8","#e2e2e2","#d4d4d4","#dcdcdc","#d2d2d2","#c2c2c2","#e2e2e2","#d8d8d8","#e4e4e4","#d6d6d6","#e4e4e4","#d8d8d8","#e2e2e2"];

export default function App() {
  return (
    <Desktop>
      <Global />
      <MenuBar>
        <AppleMark><FaApple size={32} color="#fff" /></AppleMark>
        {MENU.map(([t, w, b]) => <MenuItem key={t} $w={w} $bold={b}>{t}</MenuItem>)}
        <MenuRight>
          <StatusIcon $w={32} $mr={31}><CamStatus /></StatusIcon>
          <StatusIcon $w={48} $mr={40}><BatteryStatus /></StatusIcon>
          <StatusIcon $w={32} $mr={37}><WifiStatus /></StatusIcon>
          <StatusIcon $w={30} $mr={32}><Search size={30} color="#fff" strokeWidth={2.4} /></StatusIcon>
          <StatusIcon $w={32} $mr={34}><ControlStatus /></StatusIcon>
          <Clock>{"Mon Oct 4  8:17 PM"}</Clock>
        </MenuRight>
      </MenuBar>

      <DesktopFolder />
      <DesktopLabel>walker</DesktopLabel>

      <StackWindow>
        <StackHead />
        <StackBar>&nbsp;&nbsp;d</StackBar>
        {ROW_C.map((c, i) => <StackRow key={i} $c={c}>021</StackRow>)}
      </StackWindow>
      <MiddleWindow>
        <MiddleHead>{"u ]\ne"}</MiddleHead>
        <MiddleText>n<br />&gt;<br />:<br />R</MiddleText>
      </MiddleWindow>
      <SideScrap $y={1358}>1</SideScrap>
      <SideScrap $y={1555}>7</SideScrap>

      <CodeWindow>
        <CodeBody>
          <CodeRail />
          <CodeSide>› TIMELINE</CodeSide>
          <CodeTerm>annsabie@Anns-MacBook-Air weatherdashboard % []</CodeTerm>
        </CodeBody>
        <CodeStatus>
          <CodeItem><GitBranch size={28} />main*</CodeItem>
          <CodeItem $ml={32}><RefreshCw size={26} /></CodeItem>
          <CodeItem $ml={30} $gap={8}><XCircle size={26} />0<AlertTriangle size={26} />0</CodeItem>
          <CodeItem $ml={1521}>Spaces: 4</CodeItem>
          <CodeItem $ml={34}>UTF-8</CodeItem>
          <CodeItem $ml={34}>LF</CodeItem>
          <CodeItem $ml={32}>Markdown</CodeItem>
          <CodeItem $ml={37} $gap={4}><CheckCheck size={26} />Prettier</CodeItem>
          <CodeItem $ml={34}>
            <svg viewBox="0 0 28 34" width="28" height="34" fill="none" stroke="currentColor" strokeWidth="2">
              <path d="M10 8V2h16v16h-8M14 22l-2 3" /><circle cx="9" cy="16" r="6" /><path d="M1 33c0-7 3-11 8-11s8 4 8 11" />
            </svg>
          </CodeItem>
          <CodeItem $ml={30}><Bell size={30} /></CodeItem>
        </CodeStatus>
      </CodeWindow>

      <Browser>
        <TabStrip>
          <Lights>
            <Light $c="#ee6a5f" $b="#d5554a" />
            <Light $c="#f5bf4f" $b="#d6a243" />
            <Light $c="#61c454" $b="#58a942" />
          </Lights>
          {TABS.map(([t, icon, active], i) => (
            <Tab key={i} $active={active} $sep={i !== 4 && i !== 5}>
              {active && <TabFoot $side="left" />}
              {active && <TabFoot $side="right" />}
              <TabIcon>{icon}</TabIcon>
              <TabTitle>{t}</TabTitle>
              <TabClose><X size={24} strokeWidth={2.6} /></TabClose>
            </Tab>
          ))}
          <NewTab><Plus size={32} strokeWidth={2.6} /></NewTab>
          <TabMenu />
        </TabStrip>

        <Toolbar>
          <NavButton><ArrowLeft size={34} strokeWidth={2.2} /></NavButton>
          <NavButton $dim><ArrowRight size={34} strokeWidth={2.2} /></NavButton>
          <NavButton><RotateCw size={32} strokeWidth={2.4} /></NavButton>
          <UrlBar>
            <Lock />
            <UrlText><b>annsabie.github.io</b>/weatherdashboard/</UrlText>
            <StarSlot><Star size={32} strokeWidth={2} /></StarSlot>
          </UrlBar>
          <Puzzle><FaPuzzlePiece size={30} /></Puzzle>
          <Avatar>A</Avatar>
          <UpdateBtn>Update<Kebab><i /><i /><i /></Kebab></UpdateBtn>
        </Toolbar>

        <Bookmarks>
          {BOOKMARKS.map(([t, w, icon]) => (
            <Bookmark key={t} $w={w}><BmIcon>{icon}</BmIcon>{t}</Bookmark>
          ))}
          <BmRight>
            <Chevron>»</Chevron>
            <BmDivider />
            <Bookmark><BmIcon><ReadingIcon /></BmIcon>Reading List</Bookmark>
          </BmRight>
        </Bookmarks>

        <Page>
          <Jumbotron><Display>Weather Dashboard</Display></Jumbotron>
          <Columns>
            <SearchCard>
              <SearchLabel>Enter a City</SearchLabel>
              <InputGroup>
                <CityInput readOnly value="Minneapolis" />
                <SearchBtn><FaSearch size={32} /></SearchBtn>
              </InputGroup>
              <CityList><CityItem>Minneapolis</CityItem></CityList>
            </SearchCard>
            <Card $w={707} $ml={153} $pt={28} $pl={39} $pr={39}>
              <CardTitle $center $mb={42}>Current Weather</CardTitle>
              <Line>Minneapolis 10/4/2021</Line>
              <BigSun />
              <Line>Temperature: 61.14</Line>
            </Card>
            <Card $w={646} $ml={127} $pt={60} $pl={94}>
              <CardTitle $mb={26}>5-Day Forecast</CardTitle>
              <Line>10/4/2021</Line>
              <SmallFrame><SmallSun /></SmallFrame>
              <Line>Temperature: 62.01</Line>
              <Line>Humidity: 69%</Line>
              <Line>10/5/2021</Line>
              <SmallFrame><SmallSun /></SmallFrame>
              <Line>Temperature: 67.66</Line>
            </Card>
          </Columns>
        </Page>
      </Browser>

      <Dock>
        <DockCell><Finder /><DockDot /></DockCell>
        <DockCell><Launchpad /></DockCell>
        <DockCell><Mail /><DockDot /></DockCell>
        <DockCell>
          <CalFace><CalHead>OCT</CalHead><CalDay>4</CalDay></CalFace>
        </DockCell>
        <DockCell><AppStore /></DockCell>
        <DockCell><ChromeApp /><DockDot /></DockCell>
        <DockCell><Gear /><Badge>1</Badge></DockCell>
        <DockSep $l={17} $r={17} />
        <DockCell><VSCode /><DockDot /></DockCell>
        <DockCell><FaceTime /></DockCell>
        <DockCell><ZoomApp /><DockDot /></DockCell>
        <DockCell><Terminal /><DockDot /></DockCell>
        <DockSep $l={17} $r={17} />
        <DockCell><FolderApp /></DockCell>
        <DockCell $w={80}><Trash /></DockCell>
      </Dock>
    </Desktop>
  );
}
